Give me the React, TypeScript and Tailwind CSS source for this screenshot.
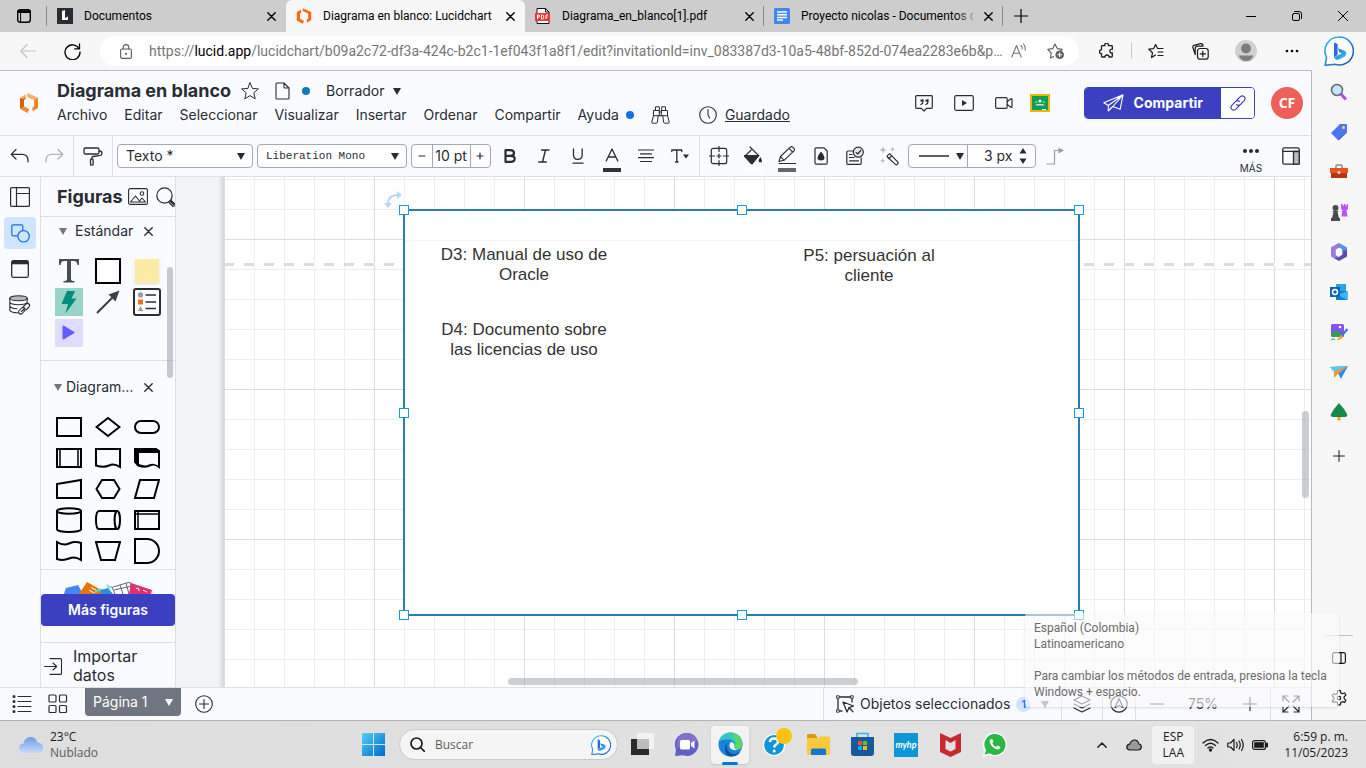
import React from "react";

type IconProps = {
  w?: number;
  h?: number;
  vb?: string;
  sw?: number;
  className?: string;
  children: React.ReactNode;
};

function Icon({ w = 20, h, vb, sw = 1.2, className = "", children }: IconProps) {
  const hh = h ?? w;
  return (
    <svg
      width={w}
      height={hh}
      viewBox={vb ?? `0 0 ${w} ${hh}`}
      fill="none"
      stroke="currentColor"
      strokeWidth={sw}
      strokeLinecap="round"
      strokeLinejoin="round"
      aria-hidden="true"
      className={`shrink-0 ${className}`}
    >
      {children}
    </svg>
  );
}

function Tri({ className = "" }: { className?: string }) {
  return (
    <svg width="8" height="7" viewBox="0 0 8 7" aria-hidden="true" className={`shrink-0 ${className}`}>
      <path d="M0 0h8L4 7z" fill="currentColor" />
    </svg>
  );
}

function LucidMark({ size, light }: { size: number; light?: boolean }) {
  const c = light ? "#f96b13" : "#d95f0e";
  return (
    <svg width={size} height={size} viewBox="0 0 20 20" aria-hidden="true" className="shrink-0">
      <path d="M1 5 6.500 2v4L5 7v6.500l5 2.800-1.500 3.400L1 15.500z" fill={c} />
      <path d="M8.500.2 19 5v10l-5.500 3.300v-4l1.700-1V7L8.500 3.700z" fill={light ? "#f96b13" : "#f08022"} />
      {!light && (
        <>
          <path d="M1 5 6.500 2v2.300L3.500 6z" fill="#fdb26b" />
          <path d="M8.500.2 19 5l-3.500 2-7-4z" fill="#fdb26b" />
          <path d="m5 13.500 5 2.800-1.500 3.400L1 15.500z" fill="#fb8c32" />
        </>
      )}
    </svg>
  );
}

function BingMark({ size }: { size: number }) {
  return (
    <svg width={size} height={size} viewBox="0 0 30 30" aria-hidden="true" className="shrink-0">
      <defs>
        <linearGradient id="bingRing" x1="0" y1="0" x2="1" y2="1">
          <stop offset="0" stopColor="#2fc3ee" />
          <stop offset=".5" stopColor="#2b7fe0" />
          <stop offset="1" stopColor="#1f4fc4" />
        </linearGradient>
        <linearGradient id="bingB" x1="0" y1="0" x2="1" y2="1">
          <stop offset="0" stopColor="#2a64d8" />
          <stop offset=".5" stopColor="#2f9be8" />
          <stop offset="1" stopColor="#3fd0d8" />
        </linearGradient>
      </defs>
      <path d="M15 1a14 14 0 1 1-4 27.300L1.200 29.300l1.400-7.800A14 14 0 0 1 15 1z" fill="#fff" stroke="url(#bingRing)" strokeWidth="1.600" />
      <path d="m10 6.500 3.600 1.600V19l-3.600 2.600z" fill="#2a6be0" />
      <path d="m13.600 19.500 4.200-2-2.600-1.200-1.200-4L20 14.400q3 1.400 2.200 4-.6 1.800-2.600 2.800l-5.400 2.600q-2.400.6-4.200-2.200z" fill="url(#bingB)" />
    </svg>
  );
}

const CloseX = ({ s = 9 }: { s?: number }) => (
  <Icon w={s} vb="0 0 9 9" sw={1.4}>
    <path d="M.8.8l7.400 7.400M8.200.8.8 8.200" />
  </Icon>
);

function Tab({ icon, title, active, fade, divider }: { icon: React.ReactNode; title: string; active?: boolean; fade?: boolean; divider?: boolean }) {
  return (
    <div
      role="tab"
      aria-selected={!!active}
      className={`relative flex h-full w-[239px] items-center gap-[11px] pl-2.5 pr-2.5 ${active ? "rounded-t-md bg-[#f7f7f7]" : ""}`}
    >
      {icon}
      <span className="min-w-0 flex-1 overflow-hidden whitespace-nowrap text-xs text-black">{title}</span>
      {fade && <span className="absolute right-6 h-5 w-6 bg-gradient-to-r from-transparent to-[#cdcdcd]" />}
      <button aria-label={`Cerrar ${title}`} className="relative shrink-0 text-black">
        <CloseX />
      </button>
      {divider && <span className="absolute right-0 h-5 w-px bg-[#8a8a8a]" />}
    </div>
  );
}

function TabStrip() {
  return (
    <div className="flex h-8 shrink-0 items-center bg-[#cdcdcd] font-[family-name:Roboto,sans-serif] text-black">
      <button aria-label="Áreas de trabajo" className="flex h-full w-[47px] items-center justify-center">
        <Icon w={14} sw={1.4}>
          <rect x=".7" y=".7" width="12.600" height="12.600" rx="2.500" />
          <path d="M1 2.600h12" strokeWidth="2.600" />
          <path d="M3.600 4v9" strokeWidth="1" />
        </Icon>
      </button>
      <div role="tablist" className="flex h-full min-w-0 items-center">
        <span className="-ml-px h-5 w-px bg-[#8a8a8a]" />
        <Tab
          title="Documentos"
          icon={
            <svg width="16" height="16" viewBox="0 0 16 16" className="shrink-0" aria-hidden="true">
              <path d="M0 0h16v16H0z" fill="#282c33" />
              <path d="M5 3l3-1v8l3-1.500v3.500H5z" fill="#fff" />
            </svg>
          }
        />
        <Tab active title="Diagrama en blanco: Lucidchart" icon={<LucidMark size={16} light />} />
        <Tab
          title="Diagrama_en_blanco[1].pdf"
          divider
          icon={
            <svg width="16" height="16" viewBox="0 0 16 16" className="shrink-0" aria-hidden="true">
              <path d="M2 .5h8.500L14 4v11.500H2z" fill="#fff" stroke="#111" />
              <path d="M10.500.5V4H14" fill="none" stroke="#111" />
              <path d="M0 5h15v8H0z" fill="#f0353c" />
              <path d="M2.500 11V7h1.800v2H2.700M6.500 7v4h1q1.300 0 1.300-2t-1.300-2zM11 11V7h2M11 9h1.600" fill="none" stroke="#fff" />
            </svg>
          }
        />
        <Tab
          title="Proyecto nicolas - Documentos d"
          fade
          divider
          icon={
            <svg width="16" height="16" viewBox="0 0 16 16" className="shrink-0" aria-hidden="true">
              <rect width="16" height="16" rx="1.500" fill="#4285f4" />
              <path d="M3 4h10M3 6.700h10M3 9.400h10M3 12h6" stroke="#fff" strokeWidth="1.500" />
            </svg>
          }
        />
      </div>
      <button aria-label="Nueva pestaña" className="flex w-9 shrink-0 justify-center">
        <Icon w={14} sw={1.2}><path d="M7 0v14M0 7h14" /></Icon>
      </button>
      <div className="ml-auto flex shrink-0">
        <button aria-label="Minimizar" className="flex w-[46px] items-center justify-center">
          <Icon w={10} sw={1}><path d="M0 5.500h10" /></Icon>
        </button>
        <button aria-label="Restaurar" className="flex w-[46px] items-center justify-center">
          <Icon w={10} sw={1}>
            <rect x=".5" y="2.500" width="7" height="7" rx="1.500" />
            <path d="M2.500.5H7q2.500 0 2.500 2.500v4.500" />
          </Icon>
        </button>
        <button aria-label="Cerrar" className="flex w-[46px] items-center justify-center">
          <Icon w={10} sw={1}><path d="M0 0l10 10M10 0 0 10" /></Icon>
        </button>
      </div>
    </div>
  );
}

function AddressRow() {
  return (
    <div className="flex h-[38px] shrink-0 items-center bg-[#f7f7f7] font-[family-name:Roboto,sans-serif] text-[#1b1b1b]">
      <button aria-label="Atrás" className="flex w-14 justify-center text-[#c4c4c4]">
        <Icon w={16} sw={1.2}><path d="M15.500 8H1M7 1.500.8 8 7 14.500" /></Icon>
      </button>
      <button aria-label="Actualizar" className="flex w-8 justify-center text-black">
        <Icon w={17} sw={1.300}>
          <path d="M15 5.500A7.500 7.500 0 1 0 16 9" />
          <path d="M15.500 1v4.800h-4.800" />
        </Icon>
      </button>
      <div className="ml-3 flex h-[30px] min-w-0 flex-1 items-center rounded-full bg-white pl-5 pr-3.5">
        <Icon w={12} h={15} className="text-[#5a5a5a]" sw={1.1}>
          <rect x=".6" y="5" width="10.800" height="9.400" rx="1.500" />
          <path d="M3.200 5V3.400a2.800 2.800 0 0 1 5.600 0V5" />
          <circle cx="6" cy="9.700" r=".5" fill="currentColor" />
        </Icon>
        <a href="#url" className="ml-[17px] min-w-0 flex-1 truncate text-sm text-[#767676]">
          https://<span className="text-black">lucid.app</span>
          /lucidchart/b09a2c72-df3a-424c-b2c1-1ef043f1a8f1/edit?invitationId=inv_083387d3-10a5-48bf-852d-074ea2283e6b&p…
        </a>
        <button aria-label="Leer en voz alta" className="ml-2 text-[#767676]">
          <Icon w={16} sw={1.1}>
            <path d="M.8 14 5.500 2.500 10.200 14M2.300 10.200h6.400M10 2.500q1.500 1.500 1 3.500M12.500 1q2.500 2.800 1.500 6" />
          </Icon>
        </button>
        <button aria-label="Agregar a favoritos" className="ml-5 text-[#5f5f5f]">
          <Icon w={18} sw={1.1}>
            <path d="M6.500 14.500 3.500 16l.7-5L.8 7.400l5-.8L8 2l2.300 4.600 5 .8-1.500 1.400" />
            <circle cx="12.700" cy="12.700" r="4.300" fill="#5f5f5f" stroke="none" />
            <path d="M12.700 10.700v4M10.700 12.700h4" stroke="#fff" />
          </Icon>
        </button>
      </div>
      <button aria-label="Extensiones" className="flex w-[52px] justify-center pl-1">
        <Icon w={16} sw={1.3}>
          <path d="M2.500 5V3.500q0-.8.800-.8h2.500a1.900 1.900 0 1 1 3.600 0H12.500q.8 0 .8.800v2.800a1.900 1.900 0 1 0 0 3.600v3.300q0 .8-.8.800H10a2 2 0 1 0-4 0H3.300q-.8 0-.8-.8v-2.500a2 2 0 1 1 0-4z" />
        </Icon>
      </button>
      <span className="h-4 w-px bg-[#c8c8c8]" />
      <button aria-label="Favoritos" className="flex w-12 justify-center">
        <Icon w={16} sw={1.2}>
          <path d="M7.500 12 3.500 14.500l1-4.700L.8 6.200l4.900-.6L7.600 1.500l2 4H15M10 9h5M10 12.500h5" />
        </Icon>
      </button>
      <button aria-label="Colecciones" className="flex w-10 justify-center">
        <Icon w={17} sw={1.2}>
          <rect x="5.500" y="5.500" width="10.700" height="10.700" rx="2.500" />
          <path d="M10.800 8.200v5.400M8.200 10.800h5.400M3.200 11.500.9 4.500q-.4-1.700 1.100-2.200l6.500-1.700q1.600-.3 2.200 1.200l.4 1.300H5.500q-2.300.4-2.300 2.400z" />
        </Icon>
      </button>
      <button aria-label="Perfil" className="flex w-[52px] justify-center">
        <svg width="22" height="22" viewBox="0 0 22 22" aria-hidden="true">
          <circle cx="11" cy="11" r="11" fill="#d2d0ce" />
          <circle cx="11" cy="8.500" r="5" fill="#7f7d7b" />
          <path d="M3.500 15.500h15q-2.500 5.500-7.500 5.500t-7.500-5.500z" fill="#7f7d7b" />
        </svg>
      </button>
      <button aria-label="Configuración y más" className="flex w-10 justify-center text-black">
        <Icon w={16} h={4}>
          <g fill="currentColor" stroke="none">
            <circle cx="3" cy="2" r="1.300" /><circle cx="8" cy="2" r="1.300" /><circle cx="13" cy="2" r="1.300" />
          </g>
        </Icon>
      </button>
      <button aria-label="Bing" className="flex w-[54px] justify-center">
        <BingMark size={30} />
      </button>
    </div>
  );
}

const menus = ["Archivo", "Editar", "Seleccionar", "Visualizar", "Insertar", "Ordenar", "Compartir", "Ayuda"];

function AppHeader() {
  return (
    <header className="flex h-[65px] shrink-0 items-center border-b border-[#dcdfe5] bg-[#fafbfe] font-[family-name:Inter,sans-serif] text-[#282c33]">
      <a href="#inicio" aria-label="Lucid" className="flex w-[57px] shrink-0 justify-center">
        <LucidMark size={20} />
      </a>
      <div className="flex flex-col">
        <div className="flex h-6 items-center">
          <h1 className="whitespace-nowrap text-lg leading-6 font-bold">Diagrama en blanco</h1>
          <button aria-label="Destacar" className="ml-2.5">
            <Icon w={18} sw={1}><path d="m9 .8 2.400 5.600 6 .5-4.600 3.900 1.400 6L9 13.600 3.800 16.800l1.400-6L.6 6.900l6-.5z" /></Icon>
          </button>
          <button aria-label="Documento" className="ml-4">
            <Icon w={15} h={18} sw={1.100}><path d="M1 2q0-1 1-1h7l5 5v10q0 1-1 1H2q-1 0-1-1zM9 1v4q0 1 1 1h4" /></Icon>
          </button>
          <span className="ml-3 h-2 w-2 rounded-full bg-[#107abe]" />
          <button className="ml-4 flex items-center gap-2 text-sm">
            Borrador <Tri />
          </button>
        </div>
        <nav className="flex h-6 items-center gap-[17px] whitespace-nowrap text-sm">
          {menus.map((m) => (
            <button key={m}>{m}</button>
          ))}
          <span className="-ml-2.5 h-2 w-2 rounded-full bg-[#1071e5]" />
          <button aria-label="Buscar funciones">
            <Icon w={19} h={18} sw={1}>
              <path d="M4.500 4.500V.8h3.800v3.700M10.700 4.500V.8h3.800v3.700M3 4.500h5.300v5.200H2.500V5q0-.5.500-.5zM10.700 4.500H16q.5 0 .5.500v4.700h-5.800zM8.300 6h2.400M8.300 9.700h2.400M2.500 9.700.8 16q-.2 1.200 1 1.200h3.400q1 0 1.200-1l.8-6.500M16.500 9.700l1.700 6.300q.2 1.200-1 1.200h-3.400q-1 0-1.200-1l-.8-6.500" />
            </Icon>
          </button>
          <a href="#historial" className="ml-3 flex items-center gap-2 underline">
            <Icon w={18} sw={1.100}><circle cx="9" cy="9" r="8.300" /><path d="M9 3.500V9l1.600 3" /></Icon>
            Guardado
          </a>
        </nav>
      </div>
      <div className="ml-auto flex items-center">
        <div className="flex items-center">
          <button aria-label="Comentarios" className="flex w-10 justify-center">
            <Icon w={18} h={17} sw={1.200}>
              <path d="M1.500.7h15q.8 0 .8.800v11q0 .8-.8.800h-5L9 16l-2.500-2.700h-5q-.8 0-.8-.8v-11q0-.8.8-.8z" />
              <path d="M8 4.500v2.200q0 2-2.200 2.800M13 4.500v2.200q0 2-2.200 2.800" />
              <path d="M5.500 4.500H8v2.300H5.500zM10.500 4.500H13v2.300h-2.500z" fill="currentColor" stroke="none" />
            </Icon>
          </button>
          <button aria-label="Presentar" className="flex w-10 justify-center">
            <Icon w={20} h={16} sw={1.200}>
              <rect x=".7" y=".7" width="18.600" height="14.600" rx="1.500" />
              <path d="M8 5v6l5-3z" fill="currentColor" stroke="none" />
            </Icon>
          </button>
          <button aria-label="Videollamada" className="flex w-10 justify-center">
            <Icon w={18} h={12} sw={1.200}>
              <rect x=".6" y=".6" width="11.600" height="10.800" rx="1.500" />
              <path d="M12.200 4.500 16 1.800q1-.6 1 .3v7.800q0 .9-1 .3l-3.800-2.700" />
            </Icon>
          </button>
          <button aria-label="Google Classroom" className="mr-2 flex w-8 justify-center">
            <svg width="20" height="18" viewBox="0 0 20 18" aria-hidden="true">
              <path d="M0 0h20v18H0z" fill="#f2b50f" />
              <path d="M2 2h16v14H2z" fill="#109d58" />
              <circle cx="10" cy="7" r="1.600" fill="#fff" />
              <circle cx="6.300" cy="8" r="1" fill="#8fd3b3" />
              <circle cx="13.700" cy="8" r="1" fill="#8fd3b3" />
              <path d="M5.500 11.500q0-1.600 2-1.600h5q2 0 2 1.600z" fill="#c5e8d7" />
              <path d="M12 15h4v1h-4z" fill="#fff" />
            </svg>
          </button>
        </div>
        <div className="ml-5 flex h-8 overflow-hidden rounded border border-[#3b40c0]">
          <button className="flex items-center gap-2.5 bg-[#3b40c0] pr-[18px] pl-[18px] text-sm font-bold text-white">
            <Icon w={21} h={18} sw={1.100}>
              <path d="M20 .8.8 8.800l4.500 2.700L20 .8l-2.800 14.400-7.400-2.700zM5.300 11.500v5.300l3-3.200M9.800 12.500 5.500 16.800" />
            </Icon>
            Compartir
          </button>
          <button aria-label="Copiar enlace" className="flex w-[33px] items-center justify-center bg-white text-[#3b40c0]">
            <Icon w={18} sw={1.100}>
              <path d="m7.500 6.500 3.800-3.800q2-1.700 3.900 0t0 3.900L11.500 10.500q-2 1.700-3.900 0M10.500 11.500l-3.800 3.800q-2 1.700-3.900 0t0-3.900L6.500 7.500q2-1.700 3.900 0" />
            </Icon>
          </button>
        </div>
        <button className="mr-2 ml-4 h-8 w-8 rounded-full bg-[#ed5f57] font-['Open_Sans',sans-serif] text-sm font-bold text-white">CF</button>
      </div>
    </header>
  );
}

function Tool({ label, children }: { label: string; children: React.ReactNode }) {
  return (
    <button aria-label={label} className="flex h-10 w-[34px] shrink-0 items-center justify-center">
      {children}
    </button>
  );
}

const Rule = ({ className = "" }: { className?: string }) => <span className={`w-px shrink-0 self-stretch bg-[#dcdfe5] ${className}`} />;

function Toolbar() {
  return (
    <div className="flex h-[41px] shrink-0 items-center overflow-hidden border-b border-[#dcdfe5] bg-[#fafbfe] font-[family-name:Inter,sans-serif] text-[#282c33]">
      <div className="mr-0.5 ml-[3px] flex">
        <Tool label="Deshacer">
          <Icon w={20} h={16} sw={1.200}><path d="M6 1.500 1.200 6.300 6 11M1.200 6.300H12q6 0 6 6.200v1.500" /></Icon>
        </Tool>
        <Tool label="Rehacer">
          <Icon w={20} h={16} sw={1.100} className="text-[#a5a8ae]"><path d="m14 1.500 4.800 4.800L14 11M18.800 6.300H8q-6 0-6 6.200v1.500" /></Icon>
        </Tool>
      </div>
      <Rule />
      <button aria-label="Copiar formato" className="flex w-[38px] shrink-0 justify-center">
        <Icon w={20} sw={1.300}>
          <rect x="1" y="2" width="15" height="6" rx="1.500" />
          <path d="M16 5q3 0 3 2t-1.500 2.300L10 10.500q-1.200.2-1.200 1.500v1" />
          <rect x="7.500" y="12.800" width="2.600" height="6.400" rx="1" />
        </Icon>
      </button>
      <Rule className="mr-1" />
      <div className="flex shrink-0 gap-1">
        <div className="relative flex items-center">
          <select aria-label="Estilo de texto" className="h-6 w-[136px] appearance-none rounded border border-[#a4a7b5] bg-white pl-2 text-sm leading-none">
            <option>Texto *</option>
          </select>
          <Tri className="pointer-events-none absolute right-2" />
        </div>
        <div className="relative flex items-center">
          <select aria-label="Fuente" className="h-6 w-[150px] appearance-none rounded border border-[#a4a7b5] bg-white pl-2 font-['Liberation_Mono',monospace] text-[11px] leading-none">
            <option>Liberation Mono</option>
          </select>
          <Tri className="pointer-events-none absolute right-2" />
        </div>
        <div className="flex h-6 w-20 items-stretch rounded border border-[#a4a7b5] bg-white text-sm">
          <button aria-label="Reducir tamaño" className="flex w-5 items-center justify-center"><Icon w={8} sw={1.2}><path d="M1 4h6" /></Icon></button>
          <input aria-label="Tamaño de fuente" defaultValue="10 pt" className="w-[39px] border-x border-[#a4a7b5] text-center outline-none" />
          <button aria-label="Aumentar tamaño" className="flex w-5 items-center justify-center"><Icon w={8} sw={1.2}><path d="M1 4h6M4 1v6" /></Icon></button>
        </div>
      </div>
      <div className="mx-0.5 flex">
        <Tool label="Negrita"><Icon w={12} h={14} sw={2.2}><path d="M1.500 1.200H6q4 0 4 2.800T6.200 6.800H1.500zM1.500 6.800h5.200q4 0 4 3t-4 3H1.500z" /></Icon></Tool>
        <Tool label="Cursiva"><Icon w={12} h={14} sw={1.4}><path d="M3.500 1h7.500M.8 13h7.500M7.500 1 4.500 13" /></Icon></Tool>
        <Tool label="Subrayado"><Icon w={12} h={16} sw={1.3}><path d="M1.500 1v6q0 4.300 4.300 4.300T10.200 7V1M1 15.200h10" /></Icon></Tool>
        <Tool label="Color de texto">
          <span className="flex flex-col items-center gap-1.5 pt-2">
            <Icon w={14} sw={1.300}><path d="M1.200 13 7 1l5.800 12M3.200 9h7.600" /></Icon>
            <span className="h-1 w-[18px] bg-[#333]" />
          </span>
        </Tool>
        <Tool label="Alinear"><Icon w={16} h={14} sw={1.200}><path d="M.5 1h15M2.500 4.800h11M.5 8.600h15M2.500 12.500h11" /></Icon></Tool>
        <Tool label="Opciones de texto">
          <Icon w={18} h={14} sw={1.300}><path d="M.8 2.500V1h10v1.500M5.800 1v12M4.500 13h2.600" /><path d="M12 5.500h6l-3 4z" fill="currentColor" stroke="none" /></Icon>
        </Tool>
      </div>
      <Rule />
      <div className="mx-0.5 flex">
        <Tool label="Forma"><Icon w={20} sw={1.200}><rect x="2.300" y="2.300" width="15.400" height="15.400" rx="2" /><path d="M10 .5v5M10 14.500v5M.5 10h5M14.500 10h5M10 8v4M8 10h4" /></Icon></Tool>
        <Tool label="Relleno">
          <span className="flex flex-col items-center gap-0.5 pt-1"><Icon w={20} h={19} sw={1.1}><path d="M7 1l8.500 8.500L8 17.500 1.500 10.500 8.200 4" /><path d="M1.500 9.500H16L9 18z" fill="currentColor" /><path d="M17.300 11q3.400 5.200 0 5.500-3.400-.3 0-5.500z" fill="currentColor" stroke="none" /></Icon><span className="h-[3px] w-[18px] bg-white" /></span>
        </Tool>
        <Tool label="Color de línea">
          <span className="flex flex-col items-center gap-1 pt-1.5"><Icon w={18} sw={1.1}><path d="m1 15.500 1.500-5L12.500.9q1.200-.8 2.500.4l1 1q1 1.300 0 2.500L6 14.300zM2.500 10.500l3.500 3.800M11 2.300l3.700 3.800M1 17.500h17" /></Icon><span className="h-1 w-[18px] bg-[#666]" /></span>
        </Tool>
        <Tool label="Opacidad"><Icon w={14} h={18} sw={1.200}><path d="M1 2q0-1.200 1.200-1.200H10L13.200 4v12q0 1.200-1.200 1.200H2.200Q1 17.200 1 16z" /><path d="M7 4.500q7 8.300 0 9-7-.7 0-9z" fill="currentColor" stroke="none" /></Icon></Tool>
        <Tool label="Tareas"><Icon w={18} h={20} sw={1.200}><path d="M8 5H2Q.8 5 .8 6.200v11q0 1.200 1.200 1.200h12q1.200 0 1.200-1.200V12M3.500 8.500H6M3.500 11.500h4.500M3.500 14.800h9" /><circle cx="12.300" cy="6.200" r="5" fill="#e8eaee" /><path d="m10 6.300 1.700 1.700 3-3.500" /></Icon></Tool>
        <Tool label="Varita"><Icon w={20} sw={1.2}><path d="m8.300 9.800 1.600-1.600q.8-.5 1.500.1l7.500 7.800q.6.800-.1 1.600l-.8.800q-.8.600-1.600-.1L8.300 11q-.4-.7 0-1.200zM9.800 12.500l3-2.900" /><path d="M4 0l1 3 3 1-3 1-1 3-1-3-3-1 3-1zM13.500.5l.7 2 2 .7-2 .7-.7 2-.7-2-2-.7 2-.7zM3.800 12l.7 2 2 .7-2 .7-.7 2-.7-2-2-.7 2-.7z" fill="#b9bbc0" stroke="none" /></Icon></Tool>
      </div>
      <div className="flex h-6 w-32 shrink-0 items-stretch rounded border border-[#a4a7b5] bg-white text-sm">
        <button aria-label="Estilo de línea" className="flex w-[59px] items-center justify-between border-r border-[#a4a7b5] pr-[3px] pl-2.5">
          <span className="h-0.5 w-[30px] bg-[#5f6066]" />
          <Tri />
        </button>
        <input aria-label="Grosor de línea" defaultValue="3 px" className="w-12 min-w-0 flex-1 pl-4 outline-none" />
        <button aria-label="Cambiar grosor" className="flex w-4 items-center justify-start">
          <svg width="8" height="16" viewBox="0 0 8 16" aria-hidden="true"><path d="M4 0l3.500 5.500h-7zM4 16l3.500-5.500h-7z" fill="currentColor" /></svg>
        </button>
      </div>
      <div className="ml-0.5">
        <Tool label="Tipo de línea"><Icon w={18} sw={1.2} className="text-[#9a9da3]"><path d="M.8 17H8.500V3.500H13" /><path d="M12.500.5 18 3.500l-5.500 3z" fill="currentColor" stroke="none" /></Icon></Tool>
      </div>
      <button className="ml-auto flex w-10 shrink-0 flex-col items-center gap-1 pt-2.5 text-[10px] leading-3">
        <Icon w={18} h={6}><g fill="currentColor" stroke="none"><circle cx="3" cy="3" r="2" /><circle cx="9" cy="3" r="2" /><circle cx="15" cy="3" r="2" /></g></Icon>
        <span className="pt-1">MÁS</span>
      </button>
      <button aria-label="Panel derecho" className="flex w-10 shrink-0 justify-center">
        <Icon w={18} sw={1.3}><rect x=".8" y=".8" width="16.400" height="16.400" rx="1.500" /><path d="M11.500 4.500h5.700v12.700h-5.700z" fill="#b9bbc0" /><path d="M.8 4.300h16.400" /></Icon>
      </button>
    </div>
  );
}

function Rail() {
  const cell = "flex h-8 w-8 items-center justify-center rounded";
  return (
    <aside className="flex w-[41px] shrink-0 flex-col items-center gap-1 border-r border-[#dcdfe5] bg-[#fafbfe] pt-1 text-[#282c33]">
      <button aria-label="Diseño" className={cell}>
        <Icon w={20} sw={1.200}><rect x=".6" y=".6" width="18.800" height="18.800" rx="1" /><path d="M6.500.6v18.800M6.500 6.500h12.900" /></Icon>
      </button>
      <button aria-label="Figuras" className={`${cell} bg-[#cfe4ff] text-[#1071e5]`}>
        <Icon w={19} sw={1.200}><path d="M6.500 11.800H2Q.8 11.800.8 10.600V2Q.8.800 2 .8h8.600Q11.800.8 11.800 2v4.500" /><circle cx="12.600" cy="12.300" r="5.700" /></Icon>
      </button>
      <button aria-label="Contenedores" className={cell}>
        <Icon w={18} sw={1.300}><rect x=".7" y=".7" width="16.600" height="16.600" rx="1.500" /><path d="M1 1h16v3.300H1z" fill="currentColor" stroke="none" /></Icon>
      </button>
      <button aria-label="Datos vinculados" className={cell}>
        <Icon w={22} h={20} sw={1.100}>
          <ellipse cx="9.500" cy="3.300" rx="8.700" ry="2.500" fill="#b5b7bc" />
          <path d="M.8 3.300v4q1 2.400 8.700 2.500 7 0 8.700-2.500v-4M.8 7.300v4Q2 13.500 8 13.800M.8 11.300v4Q2 17.800 8.500 17.800" />
          <path d="m14 12 3-3q1.800-1.200 3 0t0 3l-2.500 2.500q-1.500 1-3 0M16 13l-3.500 3.500M15.500 16l-2.300 2.500q-1.700 1.200-3 0t0-3l2.300-2.500q1.500-1 3 0" />
        </Icon>
      </button>
    </aside>
  );
}

function Shape({ children, label }: { children: React.ReactNode; label: string }) {
  return (
    <button aria-label={label} className="flex h-[31px] w-[39px] items-center justify-center">
      {children}
    </button>
  );
}

const flowShapes: [string, React.ReactNode][] = [
  ["Proceso", <path d="M1 4h24v18H1z" />],
  ["Decisión", <path d="M1.500 13 13 4l11.500 9L13 22z" />],
  ["Terminador", <rect x="1" y="7" width="24" height="12" rx="6" />],
  ["Subproceso", <><path d="M1 4h24v18H1z" /><path d="M4 4v18M22 4v18" strokeWidth="1.500" /></>],
  ["Documento", <path d="M1 4h24v18q-6-4-11-1.500T1 20.500z" />],
  ["Documentos", <><path d="M1 4h21l3 2v16q-5-4-9-1.500T4 20.500L1 17z" fill="#000" /><path d="M5 8h19V20.500q-5-3-9-1t-10-.500z" fill="#fafbfe" stroke="none" /></>],
  ["Entrada manual", <path d="M1 8l24-4v18H1z" />],
  ["Preparación", <path d="M1.500 13 7 4h12l5.500 9L19 22H7z" />],
  ["Datos", <path d="M6 4h19l-5 18H1z" />],
  ["Base de datos", <><ellipse cx="13" cy="4" rx="12" ry="2.700" /><path d="M1 4v18.500q1 2.300 12 2.500 11-.2 12-2.500V4" /></>],
  ["Almacenamiento", <><path d="M22.500 4H4Q1 4 1 13t3 9h18.500" /><ellipse cx="22.300" cy="13" rx="2.700" ry="9" /></>],
  ["Almacenamiento interno", <><path d="M1 4h24v18H1z" /><path d="M1 7h24M4 4v18" strokeWidth="1.500" /></>],
  ["Cinta", <path d="M1 4q6 4 12 1.500T25 5v17q-6-4-12-1.500T1 21z" />],
  ["Operación manual", <path d="M1 4h24l-5 18H6z" />],
  ["Retraso", <path d="M1 1h12a12 12 0 0 1 0 24H1z" />],
];

function SectionTitle({ children, gap }: { children: string; gap: string }) {
  return (
    <div className="flex items-center text-sm">
      <button className={`flex items-center whitespace-nowrap ${gap}`}>
        <Tri className="text-[#6f7681]" />
        {children}
      </button>
      <button aria-label={`Quitar ${children}`} className="ml-auto pr-[22px]"><CloseX s={9} /></button>
    </div>
  );
}

function ShapesPanel() {
  return (
    <aside className="relative flex w-[135px] shrink-0 flex-col overflow-hidden border-r border-[#dcdfe5] bg-[#fafbfe] font-[family-name:Inter,sans-serif] text-[#282c33]">
      <div className="flex h-10 shrink-0 items-center border-b border-[#dcdfe5] pl-4">
        <h2 className="w-[71px] shrink-0 text-lg font-bold">Figuras</h2>
        <button aria-label="Imágenes" className="shrink-0">
          <Icon w={20} h={17} sw={1.100}><rect x=".6" y=".6" width="18.800" height="15.800" rx="1.500" /><circle cx="14" cy="5.500" r="1.800" /><path d="m2.500 14 5-6 4 5 2.500-3 3.500 4z" /></Icon>
        </button>
        <button aria-label="Buscar figuras" className="ml-2 shrink-0">
          <Icon w={20} sw={1.200}><circle cx="8.500" cy="8.500" r="7.700" /><path d="m14 14 5.500 5.500M13 15.500l4.500 4.500M14.800 13.300l5.200 4.700" /></Icon>
        </button>
      </div>
      <section className="h-[144px] shrink-0 border-b border-[#dcdfe5] pt-1">
        <div className="pl-[18px]"><SectionTitle gap="gap-2">Estándar</SectionTitle></div>
        <div className="ml-2 grid w-[117px] grid-cols-3 pt-3.5">
          <Shape label="Texto"><svg width="20" height="24" viewBox="0 0 20 24" aria-hidden="true"><path d="M0 0h20v6h-1.500q-.5-4-3.500-4h-3v18q0 2 3.500 2v1.500h-11V22Q8 22 8 20V2H5Q2 2 1.500 6H0z" fill="#454d57" /></svg></Shape>
          <Shape label="Bloque"><span className="h-[26px] w-[26px] border-2 border-black bg-white" /></Shape>
          <Shape label="Nota"><span className="h-6 w-6 bg-[#ffeaa5] shadow" /></Shape>
          <Shape label="Acción"><span className="flex h-7 w-7 items-center justify-center bg-[#99d3ca]"><svg width="16" height="24" viewBox="0 0 16 24" aria-hidden="true"><path d="M6 1h8l-3.500 7.500h5L4.500 23.500 7 14H.5z" fill="#008f7f" /></svg></span></Shape>
          <Shape label="Flecha"><svg width="24" height="24" viewBox="0 0 24 24" aria-hidden="true"><path d="M1 23 17 7" stroke="#3a414a" strokeWidth="2.200" /><path d="M23.500.5 19.500 11.500 12.500 4.500z" fill="#3a414a" /></svg></Shape>
          <Shape label="Leyenda"><svg width="28" height="28" viewBox="0 0 28 28" aria-hidden="true"><rect x="1" y="1" width="26" height="26" rx="2" fill="#fff" stroke="#282c33" strokeWidth="2" /><circle cx="7.500" cy="7" r="2.700" fill="#979ea8" /><path d="M5 11.500h5v5H5z" fill="#f96b13" /><path d="m7.500 18 2.700 5H4.800z" fill="#979ea8" /><path d="M12.500 7h10.500M12.500 14h10.500M12.500 20.500h10.500" stroke="#282c33" strokeWidth="1.400" /></svg></Shape>
          <Shape label="Presentación"><span className="flex h-7 w-7 items-center justify-center bg-[#dedcff]"><svg width="13" height="15" viewBox="0 0 13 15" aria-hidden="true"><path d="M1.500 1.500v12l10-6z" fill="#635dff" stroke="#635dff" strokeWidth="2" strokeLinejoin="round" /></svg></span></Shape>
        </div>
      </section>
      <section className="h-[209px] shrink-0 border-b border-[#dcdfe5] pt-4">
        <div className="pl-[13px]"><SectionTitle gap="gap-1">Diagram…</SectionTitle></div>
        <div className="ml-2 grid w-[117px] grid-cols-3 pt-3.5">
          {flowShapes.map(([name, d]) => (
            <Shape key={name} label={name}>
              <svg width="26" height="26" viewBox="0 0 26 26" fill="none" stroke="#000" strokeWidth="2" aria-hidden="true">{d}</svg>
            </Shape>
          ))}
        </div>
      </section>
      <div className="flex h-[73px] shrink-0 flex-col items-center border-b border-[#dcdfe5] pt-3">
        <svg width="90" height="12" viewBox="0 0 90 12" aria-hidden="true" className="shrink-0">
          <path d="m3 6 12-3 5 9H1z" fill="#4386f5" />
          <path d="m24 0 16 9v3H16z" fill="#e8750c" />
          <path d="M28 5.500l5 2.500M26 8l5 3" stroke="#fff" />
          <path d="M32 11q2-4 8-3" stroke="#3de0e8" strokeWidth="2" fill="none" />
          <path d="m38 8 7-2 5 6H38z" fill="#2a8fdc" />
          <path d="m44 1 2 3 4 0-3 3-3-2z" fill="#6be4f5" />
          <path d="m50 5 17-5 3 12M49 5l3 7M51 8l18-4M57 3l3 9M63 1l3 11" stroke="#606873" fill="none" />
          <path d="m68 1 21 7-1 4H66z" fill="#e0316e" />
          <path d="M73 7q3-3 3 2M80 8l4 2" stroke="#fff" fill="none" />
        </svg>
        <button className="h-8 w-full shrink-0 rounded bg-[#3b40c0] text-sm font-semibold text-white">Más figuras</button>
      </div>
      <button className="flex items-center gap-2.5 pt-1 pl-[3px] text-left text-base leading-[19px]">
        <Icon w={19} h={17} sw={1.100}><path d="M6 .6h10.500q1 0 1 1v13.800q0 1-1 1H6M.6 8.500h12M9 5l3.700 3.500L9 12" /></Icon>
        Importar datos
      </button>
      <span className="absolute top-[90px] right-0.5 h-[111px] w-1.5 rounded-full bg-[#a4a7b5]/60" />
    </aside>
  );
}

const handles = [
  "-top-1 -left-1",
  "-top-1 left-1/2 -translate-x-1/2",
  "-top-1 -right-1",
  "top-1/2 -left-1 -translate-y-1/2",
  "top-1/2 -right-1 -translate-y-1/2",
  "-bottom-1 -left-1",
  "-bottom-1 left-1/2 -translate-x-1/2",
  "-bottom-1 -right-1",
];

function Canvas() {
  const label = "absolute w-[172px] text-center text-[17px] leading-5 text-[#333]";
  return (
    <main className="relative min-w-0 flex-1 overflow-hidden bg-[#f1f3f5] font-['Liberation_Sans',sans-serif]">
      <div className="absolute inset-y-0 left-[42px] w-1.5 bg-gradient-to-r from-transparent to-[#d4d6d8]" />
      <div className="absolute inset-y-0 right-0 left-12 bg-white bg-[linear-gradient(#dcdcdc_1px,transparent_1px),linear-gradient(90deg,#dcdcdc_1px,transparent_1px),linear-gradient(#eee_1px,transparent_1px),linear-gradient(90deg,#eee_1px,transparent_1px)] bg-[size:150px_150px,150px_150px,30px_30px,30px_30px] bg-[position:0_62px,0_0,0_2px,0_0]" />
      <div className="absolute top-[86px] right-0 left-12 h-[3px] bg-[repeating-linear-gradient(90deg,#dcdcdc_0_10px,#fff_10px_20px)]" />
      <div className="absolute top-8 left-[227px] h-[407px] w-[677px] border-2 border-[#2a7fa8] bg-white">
        <span className="absolute inset-x-0 top-[29px] h-px bg-[#f3f3f3]" />
        <p className={`${label} top-[34px] left-[33px]`}>D3: Manual de uso de Oracle</p>
        <p className={`${label} top-[109px] left-[33px]`}>D4: Documento sobre las licencias de uso</p>
        <p className={`${label} top-[35px] left-[378px] px-4`}>P5: persuación al cliente</p>
      </div>
      <div className="absolute top-7 left-[223px] h-[415px] w-[685px]">
        <div className="relative m-1 h-[407px] w-[677px]">
          {handles.map((p) => (
            <span key={p} className={`absolute h-2.5 w-2.5 border border-[#1a9bd8] bg-white ${p}`} />
          ))}
        </div>
      </div>
      <svg width="18" height="18" viewBox="0 0 18 18" aria-hidden="true" className="absolute top-[14px] left-[208px]">
        <path d="M4 13Q4 4 14 4" fill="none" stroke="#b9d7f5" strokeWidth="2" />
        <path d="M0 12h8l-4 5zM13 0l5 4-5 4z" fill="#b9d7f5" />
      </svg>
      <span className="absolute right-0.5 top-[234px] h-[87px] w-[7px] rounded-full bg-[#9aa0aa]/50" />
      <span className="absolute bottom-0.5 left-[332px] h-[7px] w-[350px] rounded-full bg-[#9aa0aa]/50" />
    </main>
  );
}

function BottomBar() {
  return (
    <footer className="flex h-[33px] shrink-0 items-center border-t border-[#dcdfe5] bg-[#fafbfe] font-[family-name:Inter,sans-serif] text-sm text-[#282c33]">
      <button aria-label="Lista de páginas" className="ml-3 flex">
        <Icon w={20} sw={1.200}><path d="M6 2.500h13M6 7.500h13M6 12.500h13M6 17.500h13" /><path d="M2 2.500h.01M2 7.500h.01M2 12.500h.01M2 17.500h.01" strokeWidth="3" /></Icon>
      </button>
      <button aria-label="Cuadrícula de páginas" className="ml-4 flex">
        <Icon w={20} sw={1.200}><rect x="1" y="1" width="7" height="7" rx="1" /><rect x="11.500" y="1" width="7" height="7" rx="1" /><rect x="1" y="11.500" width="7" height="7" rx="1" /><rect x="11.500" y="11.500" width="7" height="7" rx="1" /></Icon>
      </button>
      <button className="ml-[17px] flex h-7 w-24 items-center justify-between self-start rounded-b bg-[#6f7681] px-2 text-white">
        Página 1 <Tri />
      </button>
      <button aria-label="Agregar página" className="ml-3.5 flex">
        <Icon w={18} sw={1.100}><circle cx="9" cy="9" r="8.300" /><path d="M9 4.500v9M4.500 9h9" /></Icon>
      </button>
      <div className="ml-auto flex h-full items-center">
        <Rule />
        <button className="flex h-full w-[237px] items-center gap-1.5 pl-3 whitespace-nowrap">
          <Icon w={18} sw={1.300}>
            <path d="M2 2h14v5M2 2v14h4" />
            <path d="M.8.8h2.400v2.400H.8zM14.800.8h2.400v2.400h-2.400zM.8 14.800h2.400v2.400H.8z" fill="#fafbfe" strokeWidth=".9" />
            <path d="m7 7 10.500 4-4.500 1.700L11 17z" /><path d="m13 12.700 4 4" />
          </Icon>
          <span>Objetos seleccionados</span>
          <span className="flex h-[15px] w-[15px] items-center justify-center rounded-full bg-[#cfe4ff] text-[10px] font-bold text-[#1071e5]">1</span>
          <Tri className="ml-1 text-[#6f7681]" />
        </button>
        <Rule />
        <button aria-label="Capas" className="flex w-10 justify-center">
          <Icon w={18} sw={1.200}><path d="m9 1 8 4-8 4-8-4zM1 9l8 4 8-4M1 13l8 4 8-4" /></Icon>
        </button>
        <Rule />
        <button aria-label="Navegación" className="flex w-8 justify-center">
          <Icon w={18} sw={1.200}><circle cx="9" cy="9" r="8.200" /><path d="m9 3.500 4 9-4-2-4 2z" /></Icon>
        </button>
        <Rule />
        <button aria-label="Alejar" className="flex w-[41px] justify-center"><Icon w={14} sw={1.200}><path d="M.5 7h13" /></Icon></button>
        <span className="w-[52px] text-center">75%</span>
        <button aria-label="Acercar" className="flex w-[41px] justify-center"><Icon w={14} sw={1.200}><path d="M.5 7h13M7 .5v13" /></Icon></button>
        <Rule />
        <button aria-label="Pantalla completa" className="flex w-10 justify-center">
          <Icon w={18} sw={1.200}><path d="M1 6V1h5M1 1l6 6M12 1h5v5M17 1l-6 6M1 12v5h5M1 17l6-6M12 17h5v-5M17 17l-6-6" /></Icon>
        </button>
      </div>
    </footer>
  );
}

const sideApps: [string, React.ReactNode][] = [
  ["Búsqueda", <><path d="m11 11 5 5.500" stroke="#b44cf0" strokeWidth="3" /><circle cx="7" cy="7" r="5.500" fill="#c3e6f8" stroke="#66696e" strokeWidth="1.500" /></>],
  ["Compras", <><path d="M10 1h6.500q.5 0 .5.500V8l-9 8.500L1 10z" fill="#4777f5" /><path d="M1 10l7 6.500 9-8.500v1.500L8.500 17.500z" fill="#2f45cf" /><circle cx="13.500" cy="4.500" r="1.500" fill="#ffd94a" /></>],
  ["Herramientas", <><path d="M6 5V3q0-1 1-1h4q1 0 1 1v2" fill="none" stroke="#8d8d8d" strokeWidth="1.500" /><path d="M0 5h18v5H0z" fill="#e8551d" /><path d="M1 10h16v5H1z" fill="#b8350f" /><circle cx="9" cy="9.500" r="1.500" fill="#ddd" /></>],
  ["Juegos", <><path d="M11 1h1.500v1.500H14V1h1.500v1.500H17V1h1v5l-1.500 1 1 6.500h-6l.8-6.500L11 6z" fill="#c053f5" /><circle cx="5.500" cy="5" r="3" fill="#4b4b4b" /><path d="M2 8h7l-1.500 1 1.500 6h1v3H1v-3h1l1.500-6z" fill="#4b4b4b" /></>],
  ["Microsoft 365", <><path d="M9 0l8 4.500v6L12 8V6L9 4.500 5.500 6.500V13L1 10.500v-6z" fill="#5b8fe8" /><path d="M1 4.500 9 0v4.500L5.500 6.500V12L9 14l-2 3-6-3.500z" fill="#9c7bdc" /><path d="M17 7v6.500L9 18l-5-3 5-1 3.500-2.500V8z" fill="#5a4aac" /><circle cx="9" cy="9" r="3" fill="#f7f7f7" /></>],
  ["Outlook", <><path d="M6 1h10v14H6z" fill="#29a4e8" /><path d="M6 8h11.500v9H6z" fill="#1679d0" /><path d="M17.500 8v9L7 12z" fill="#3ab6f2" /><path d="M0 4h10v10H0z" fill="#0b63b8" /><circle cx="5" cy="9" r="2.500" fill="none" stroke="#fff" strokeWidth="1.500" /></>],
  ["Imágenes", <><rect x="1" y="1" width="13" height="13" rx="1.500" fill="#8c4fe8" /><path d="M1 12q4-7 7-4t6 4l-1 2H2z" fill="#2ca05a" /><circle cx="10" cy="4" r="1.300" fill="#fff" /><path d="m17.500 6-6 7" stroke="#3f6ff0" strokeWidth="2.200" /><path d="m11.500 12-4 5 4.500-2z" fill="#f7a928" stroke="#f7a928" /><path d="M1 17q2-2 4-.5" fill="none" stroke="#2ca05a" /></>],
  ["Drop", <><path d="M0 4 18 3l-7 13-2.500-5z" fill="#2a8df0" /><path d="M0 4 18 3 4 9z" fill="#5cc8fa" /><path d="M18 3 4 9v6l4-4z" fill="#f59a23" /></>],
  ["Árbol", <><path d="M7.500 12h3v5.500h-3z" fill="#f0a020" /><path d="m9 0 5 6 3 5q1 3-2 3H3q-3 0-2-3l3-5z" fill="#178a4a" /></>],
];

function EdgeSidebar() {
  return (
    <aside className="flex w-[54px] shrink-0 flex-col items-center bg-[#f7f7f7] pt-0.5 text-[#1b1b1b]">
      {sideApps.map(([name, art]) => (
        <button key={name} aria-label={name} className="flex h-10 w-10 shrink-0 items-center justify-center">
          <svg width="18" height="18" viewBox="0 0 18 18" aria-hidden="true">{art}</svg>
        </button>
      ))}
      <button aria-label="Personalizar" className="flex h-12 items-center"><Icon w={12} sw={1}><path d="M6 .5v11M.5 6h11" /></Icon></button>
      <div className="mt-auto flex flex-col items-center pb-0.5">
        <span className="mb-0.5 h-px w-7 bg-[#c4c4c4]" />
        <button aria-label="Ocultar barra" className="flex h-10 items-center"><Icon w={14} h={12} sw={1.200}><rect x=".6" y=".6" width="12.800" height="10.800" rx="1.800" /><path d="M9 .6v10.800" /></Icon></button>
        <button aria-label="Configuración" className="flex h-10 items-center">
          <Icon w={18} vb="0 0 24 24" sw={1.600}>
            <path d="M10.300 2h3.400l.7 3.200 2 1.100 3.100-1 1.700 2.900-2.400 2.200v2.400l2.400 2.200-1.700 2.900-3.100-1-2 1.100-.7 3.200h-3.400l-.7-3.200-2-1.100-3.100 1L2.800 16l2.400-2.200v-2.400L2.800 9.200l1.700-2.900 3.100 1 2-1.100z" />
            <circle cx="12" cy="12" r="2.300" />
          </Icon>
        </button>
      </div>
    </aside>
  );
}

const taskApps: [string, React.ReactNode][] = [
  ["Vista de tareas", <><path d="M1 7h18v16H1z" fill="#2b2b2b" /><path d="M7 1h17v16H7z" fill="#f3f3f3" /><path d="M7 7h12v10H7z" fill="#bdbdbd" /></>],
  ["Chat", <><path d="M13 1a11.500 11.500 0 1 1-4 22.300L1 24l1-6.500A11.500 11.500 0 0 1 13 1z" fill="#5f5fc9" /><path d="M13 1a11.500 11.500 0 0 1 11 9L3 16A11.500 11.500 0 0 1 13 1z" fill="#8370c8" /><rect x="6" y="8" width="10" height="9.500" rx="1.500" fill="#fff" /><path d="m17 11 3.500-2.500v8L17 14z" fill="#fff" /></>],
  ["Edge", <><circle cx="12.500" cy="12.500" r="12" fill="#1683d8" /><path d="M1 9A12 12 0 0 1 24.500 12q.3 5-5 5.500-4 .2-3.500-2.500 1-1 .8-3Q16 8 11 7.500 5 7 1 9z" fill="#37c6c0" /><path d="M14 .7A12 12 0 0 1 24.500 12q.3 5-5 5.500-4 .2-3.500-2.500 3-3 1-7z" fill="#5bd66a" /><path d="M10 11q-3 5 1.500 9.500 4.500 3.500 11-.5A12 12 0 0 1 12 24.500Q7 23 7 17q0-4 3-6z" fill="#0f4f9e" /><path d="M12.500 10q3.500 0 4 3-.8 2-.2 3 .8 1.500 3.200 1.500-3 1.500-6.500-.5-3-3-.5-7z" fill="#f4f4f4" /></>],
  ["Ayuda HP", <><circle cx="12" cy="13" r="10.500" fill="#0f96d6" stroke="#fff" strokeWidth="1.200" /><path d="M8 10q0-3.500 4-3.500t4 3.200q0 2-2 3-1.700.8-1.700 2.800" fill="none" stroke="#fff" strokeWidth="2.500" /><circle cx="12.200" cy="19" r="1.500" fill="#fff" /></>],
  ["Explorador de archivos", <><path d="M1 3q0-1 1-1h7l2 2.500V9H1z" fill="#d99a0b" /><path d="M1 6h11l2-1.500h9q1 0 1 1V22q0 1-1 1H2q-1 0-1-1z" fill="#fcc93d" /><path d="M5 23v-5q0-1.500 1.500-1.500h12Q20 16.500 20 18v5z" fill="#1277cf" /></>],
  ["Microsoft Store", <><path d="M7 6V1.500h11V6" fill="none" stroke="#2db4ef" strokeWidth="1.600" /><path d="M1 5h23v16q0 3-3 3H4q-3 0-3-3z" fill="#175a9c" /><path d="M8 9h4v4H8z" fill="#f25022" /><path d="M13 9h4v4h-4z" fill="#7fba00" /><path d="M8 14h4v4H8z" fill="#00a4ef" /><path d="M13 14h4v4h-4z" fill="#ffb900" /></>],
  ["myHP", null],
  ["McAfee", <path d="M2 1l10.500 5L23 1v19l-10.500 5L2 20zM7.500 8v9l5 2.500 5-2.500V8l-5 3z" fill="#c62a2f" fillRule="evenodd" />],
  ["WhatsApp", <><path d="M13 .5A12 12 0 1 1 7 23L.5 25l2-6.500A12 12 0 0 1 13 .5z" fill="#fff" /><path d="M13 2A10.500 10.500 0 1 1 7.300 21.300L2.500 22.800 4 18A10.500 10.500 0 0 1 13 2z" fill="#2cb742" /><path d="M9 7q-2 1-1.200 3.500 2 5.500 7.700 7 2.500 0 3-2.500l-3-1.500-1.500 1.500q-2.500-1-3.700-3.700L11.500 10 10.300 7z" fill="#fff" /></>],
];

function Taskbar() {
  return (
    <div className="flex h-12 shrink-0 items-center border-t border-[#b4b4b4] bg-gradient-to-r from-[#dedede] to-[#e3e3e3] text-xs text-[#1b1b1b]">
      <div className="flex flex-1 items-center">
        <button className="ml-[18px] flex items-center gap-1.5 text-left leading-4">
          <svg width="26" height="18" viewBox="0 0 26 18" aria-hidden="true">
            <defs><linearGradient id="cloud" x1="0" y1="0" x2="0" y2="1"><stop offset="0" stopColor="#6f9fe8" /><stop offset="1" stopColor="#c4dafb" /></linearGradient></defs>
            <path d="M6 17q-5-.3-5-5 .2-4 4.500-4.500Q7 1 12.500 1 18 1 19.500 6.500 25 7 25 12q-.3 5-5 5z" fill="url(#cloud)" />
          </svg>
          <span>23°C<span className="block text-[#5b5b5b]">Nublado</span></span>
        </button>
      </div>
      <div className="flex shrink-0 items-center pl-3">
        <button aria-label="Inicio" className="mr-3.5 flex">
          <svg width="23" height="23" viewBox="0 0 23 23" aria-hidden="true">
            <defs><linearGradient id="win" x1="0" y1="0" x2="1" y2="1"><stop offset="0" stopColor="#4fd1fb" /><stop offset="1" stopColor="#0068c8" /></linearGradient></defs>
            <path d="M0 0h11v11H0zM12 0h11v11H12zM0 12h11v11H0zM12 12h11v11H12z" fill="url(#win)" />
          </svg>
        </button>
        <label className="flex h-[31px] w-[219px] items-center rounded-full border border-[#cacaca] bg-[#f5f5f5] pr-1.5 pl-2.5">
          <Icon w={15} sw={1.700}><circle cx="6.500" cy="6.500" r="5.500" /><path d="m10.500 10.500 4 4" /></Icon>
          <input aria-label="Buscar" placeholder="Buscar" className="ml-2.5 min-w-0 flex-1 bg-transparent outline-none placeholder:text-[#5b5b5b]" />
          <BingMark size={20} />
        </label>
        <div className="ml-0.5 flex">
          {taskApps.map(([name, art]) => (
            <button key={name} aria-label={name} className="relative flex h-10 w-11 items-center justify-center">
              {name === "Edge" && <span className="absolute inset-x-[3px] inset-y-px rounded bg-[#f3f3f3] shadow-sm" />}
              {art ? (
                <svg width="25" height="25" viewBox="0 0 25 25" aria-hidden="true" className="relative">{art}</svg>
              ) : (
                <span className="flex h-6 w-6 items-center justify-center bg-[#0f96d6] font-['Lato',sans-serif] text-[9px] font-bold text-white italic">myhp</span>
              )}
              {name === "Edge" && <span className="absolute bottom-0 h-[3px] w-4 rounded-full bg-[#0078d4]" />}
              {name === "Ayuda HP" && <span className="absolute top-[3px] right-1 h-4 w-4 rounded-full bg-[#ffc20e]" />}
            </button>
          ))}
        </div>
      </div>
      <div className="flex flex-1 items-center justify-end">
        <button aria-label="Iconos ocultos" className="flex w-7 justify-center"><Icon w={10} h={6} sw={1.400}><path d="m.8 5.200 4.200-4.200 4.200 4.200" /></Icon></button>
        <button aria-label="OneDrive" className="flex w-9 justify-center"><Icon w={16} h={12} sw={1.200}><path d="M4 11q-3.200-.2-3.200-3Q1 5.500 3.800 5.200 5 1 8.500 1t4.300 4q2.500.3 2.500 3-.2 3-3.300 3z" fill="#9a9a9a" /></Icon></button>
        <button className="flex h-[38px] w-[42px] flex-col items-center justify-center rounded bg-[#f1f1f1] leading-4"><span>ESP</span><span>LAA</span></button>
        <button aria-label="Red, volumen y batería" className="flex items-center gap-2 pl-2">
          <Icon w={17} h={14} sw={1.300}><path d="M1 5q7.500-7 15 0M3.500 7.500q5-4.600 10 0M6 10q2.500-2.300 5 0" /><circle cx="8.500" cy="12" r="1" fill="currentColor" /></Icon>
          <Icon w={17} h={14} sw={1.200}><path d="M.8 5h2.700L7 1.500v11L3.500 9H.8zM9.500 4.500q1.500 2.500 0 5M12 3q2.500 4 0 8M14.500 1.500q3.500 5.500 0 11" /></Icon>
          <Icon w={16} h={10} sw={1.200}><rect x=".6" y=".6" width="12.800" height="8.800" rx="2" /><rect x="2.200" y="2.200" width="9.600" height="5.600" fill="currentColor" stroke="none" /><path d="M15 3.500v3" strokeWidth="2" /></Icon>
        </button>
        <button className="mr-[18px] ml-4 text-right leading-4 whitespace-nowrap">6:59 p. m.<br />11/05/2023</button>
      </div>
    </div>
  );
}

export default function App() {
  return (
    <div className="relative flex h-screen flex-col overflow-hidden font-['Open_Sans',sans-serif]">
      <TabStrip />
      <AddressRow />
      <div className="flex min-h-0 flex-1">
        <div className="flex min-w-0 flex-1 flex-col border-t border-r border-[#b9bbc0]">
          <AppHeader />
          <Toolbar />
          <div className="flex min-h-0 flex-1">
            <Rail />
            <ShapesPanel />
            <Canvas />
          </div>
          <BottomBar />
        </div>
        <EdgeSidebar />
      </div>
      <Taskbar />
      <div role="tooltip" className="absolute right-[27px] bottom-[61px] w-[314px] rounded bg-[#fafafa]/60 py-[7px] pr-1 pl-[9px] font-[family-name:Roboto,sans-serif] text-xs leading-4 text-[#6b6b6b] shadow">
        <p>Español (Colombia)</p>
        <p className="mb-4">Latinoamericano</p>
        <p>Para cambiar los métodos de entrada, presiona la tecla Windows + espacio.</p>
      </div>
    </div>
  );
}
